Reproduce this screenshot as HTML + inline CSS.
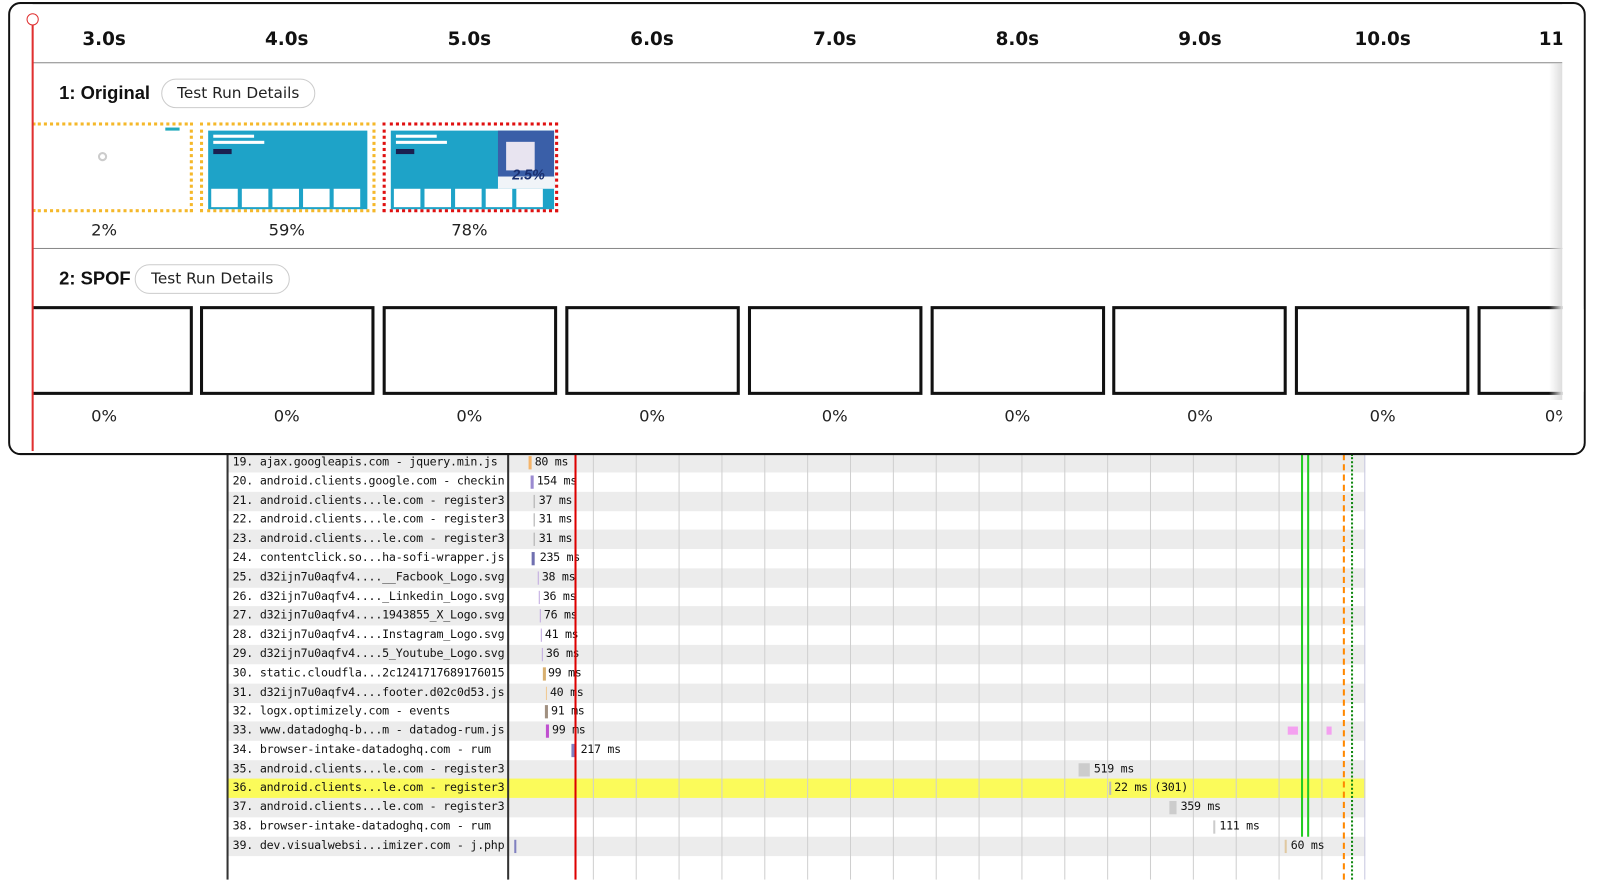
<!DOCTYPE html>
<html><head><meta charset="utf-8"><style>
*{margin:0;padding:0;box-sizing:border-box}
body{width:1600px;height:862px;background:#fff;position:relative;overflow:hidden;font-family:"Liberation Sans",sans-serif}
#w{position:absolute;left:0;top:0;width:1568px;height:845px;transform:scale(1.0204);transform-origin:0 0}
.a{position:absolute}
.row{position:absolute;left:222px;width:1116px;height:19px}
.lbl{position:absolute;left:6px;top:1px;font-family:"DejaVu Sans Mono","Liberation Mono",monospace;font-size:11.4px;color:#111;white-space:nowrap;letter-spacing:-0.2px}
.ms{position:absolute;top:1px;font-family:"DejaVu Sans Mono","Liberation Mono",monospace;font-size:11.4px;color:#111;white-space:nowrap;letter-spacing:-0.3px}
.bar{position:absolute;top:3px;height:13px;width:3px}
.grid{position:absolute;top:445px;height:417px;width:1px;background:#cfcfcf}
.tl{position:absolute;top:24px;font-size:18px;font-weight:bold;color:#111;width:80px;margin-left:-40px;text-align:center;font-family:"DejaVu Sans","Liberation Sans",sans-serif}
.pc{position:absolute;font-size:16px;color:#222;width:80px;margin-left:-40px;text-align:center;font-family:"DejaVu Sans","Liberation Sans",sans-serif}
.fr{position:absolute;top:300px;height:87px;border:3px solid #111;background:#fff}
.pill{position:absolute;border:1px solid #ccc;border-radius:15px;height:29px;font-size:15px;color:#222;text-align:center;line-height:27px;font-family:"DejaVu Sans","Liberation Sans",sans-serif}
.rl{position:absolute;font-size:18px;font-weight:bold;color:#111;font-family:"Liberation Sans",sans-serif}
</style></head><body><div id="w">

<div class="a" style="left:222px;top:445px;width:1116px;height:417px;background:#fff"></div>
<div class="row" style="top:444px;background:#ececec"></div>
<div class="row" style="top:482px;background:#ececec"></div>
<div class="row" style="top:519px;background:#ececec"></div>
<div class="row" style="top:557px;background:#ececec"></div>
<div class="row" style="top:594px;background:#ececec"></div>
<div class="row" style="top:632px;background:#ececec"></div>
<div class="row" style="top:670px;background:#ececec"></div>
<div class="row" style="top:707px;background:#ececec"></div>
<div class="row" style="top:745px;background:#ececec"></div>
<div class="row" style="top:763px;background:#fbfb5a"></div>
<div class="row" style="top:782px;background:#ececec"></div>
<div class="row" style="top:820px;background:#ececec"></div>

<div class="grid" style="left:581px"></div><div class="grid" style="left:623px"></div><div class="grid" style="left:665px"></div><div class="grid" style="left:707px"></div><div class="grid" style="left:749px"></div><div class="grid" style="left:791px"></div><div class="grid" style="left:833px"></div><div class="grid" style="left:875px"></div><div class="grid" style="left:917px"></div><div class="grid" style="left:959px"></div><div class="grid" style="left:1001px"></div><div class="grid" style="left:1043px"></div><div class="grid" style="left:1085px"></div><div class="grid" style="left:1127px"></div><div class="grid" style="left:1169px"></div><div class="grid" style="left:1211px"></div><div class="grid" style="left:1253px"></div><div class="grid" style="left:1295px"></div>
<div class="a" style="left:1337px;top:445px;width:1px;height:417px;background:#c8c8e0"></div>
<div class="a" style="left:222px;top:445px;width:2px;height:417px;background:#333"></div>
<div class="a" style="left:497px;top:445px;width:2px;height:417px;background:#333"></div>

<div class="row" style="top:444px"><span class="lbl">19. ajax.googleapis.com - jquery.min.js</span><div class="bar" style="left:296px;background:#f4b46a"></div><span class="ms" style="left:302px">80 ms</span></div>
<div class="row" style="top:463px"><span class="lbl">20. android.clients.google.com - checkin</span><div class="bar" style="left:298px;background:#9a8ad0"></div><span class="ms" style="left:304px">154 ms</span></div>
<div class="row" style="top:482px"><span class="lbl">21. android.clients...le.com - register3</span><div class="bar" style="left:301px;width:1px;background:#aaa"></div><span class="ms" style="left:306px">37 ms</span></div>
<div class="row" style="top:500px"><span class="lbl">22. android.clients...le.com - register3</span><div class="bar" style="left:301px;width:1px;background:#aaa"></div><span class="ms" style="left:306px">31 ms</span></div>
<div class="row" style="top:519px"><span class="lbl">23. android.clients...le.com - register3</span><div class="bar" style="left:301px;width:1px;background:#aaa"></div><span class="ms" style="left:306px">31 ms</span></div>
<div class="row" style="top:538px"><span class="lbl">24. contentclick.so...ha-sofi-wrapper.js</span><div class="bar" style="left:299px;background:#7070b0"></div><span class="ms" style="left:307px">235 ms</span></div>
<div class="row" style="top:557px"><span class="lbl">25. d32ijn7u0aqfv4....__Facbook_Logo.svg</span><div class="bar" style="left:305px;width:1px;background:#c0a8e0"></div><span class="ms" style="left:309px">38 ms</span></div>
<div class="row" style="top:576px"><span class="lbl">26. d32ijn7u0aqfv4...._Linkedin_Logo.svg</span><div class="bar" style="left:306px;width:1px;background:#c0a8e0"></div><span class="ms" style="left:310px">36 ms</span></div>
<div class="row" style="top:594px"><span class="lbl">27. d32ijn7u0aqfv4....1943855_X_Logo.svg</span><div class="bar" style="left:307px;width:1px;background:#c0a8e0"></div><span class="ms" style="left:311px">76 ms</span></div>
<div class="row" style="top:613px"><span class="lbl">28. d32ijn7u0aqfv4....Instagram_Logo.svg</span><div class="bar" style="left:308px;width:1px;background:#c0a8e0"></div><span class="ms" style="left:312px">41 ms</span></div>
<div class="row" style="top:632px"><span class="lbl">29. d32ijn7u0aqfv4....5_Youtube_Logo.svg</span><div class="bar" style="left:309px;width:1px;background:#c0a8e0"></div><span class="ms" style="left:313px">36 ms</span></div>
<div class="row" style="top:651px"><span class="lbl">30. static.cloudfla...2c1241717689176015</span><div class="bar" style="left:310px;background:#d8b070"></div><span class="ms" style="left:315px">99 ms</span></div>
<div class="row" style="top:670px"><span class="lbl">31. d32ijn7u0aqfv4....footer.d02c0d53.js</span><div class="bar" style="left:313px;width:1px;background:#f0c890"></div><span class="ms" style="left:317px">40 ms</span></div>
<div class="row" style="top:688px"><span class="lbl">32. logx.optimizely.com - events</span><div class="bar" style="left:312px;background:#a09080"></div><span class="ms" style="left:318px">91 ms</span></div>
<div class="row" style="top:707px"><span class="lbl">33. www.datadoghq-b...m - datadog-rum.js</span><div class="bar" style="left:313px;background:#c050d0"></div><span class="ms" style="left:319px">99 ms</span></div>
<div class="row" style="top:726px"><span class="lbl">34. browser-intake-datadoghq.com - rum</span><div class="bar" style="left:338px;background:#8080c0"></div><span class="ms" style="left:347px">217 ms</span></div>
<div class="row" style="top:745px"><span class="lbl">35. android.clients...le.com - register3</span><div class="bar" style="left:835px;width:11px;background:#ccc"></div><span class="ms" style="left:850px">519 ms</span></div>
<div class="row" style="top:763px"><span class="lbl">36. android.clients...le.com - register3</span><div class="bar" style="left:865px;width:2px;background:#bbb"></div><span class="ms" style="left:870px">22 ms (301)</span></div>
<div class="row" style="top:782px"><span class="lbl">37. android.clients...le.com - register3</span><div class="bar" style="left:924px;width:7px;background:#ccc"></div><span class="ms" style="left:935px">359 ms</span></div>
<div class="row" style="top:801px"><span class="lbl">38. browser-intake-datadoghq.com - rum</span><div class="bar" style="left:967px;width:2px;background:#ccc"></div><span class="ms" style="left:973px">111 ms</span></div>
<div class="row" style="top:820px"><span class="lbl">39. dev.visualwebsi...imizer.com - j.php</span><div class="bar" style="left:282px;width:2px;background:#8080c0"></div><div class="bar" style="left:1037px;width:2px;background:#e0c8a0"></div><span class="ms" style="left:1043px">60 ms</span></div>

<div class="a" style="left:1262px;top:712px;width:10px;height:8px;background:#f4a0f0"></div>
<div class="a" style="left:1300px;top:712px;width:5px;height:8px;background:#f4a0f0"></div>
<div class="a" style="left:563px;top:445px;width:2px;height:417px;background:#d00"></div>
<div class="a" style="left:1275px;top:445px;width:2px;height:375px;background:#2c2"></div>
<div class="a" style="left:1281px;top:445px;width:2px;height:375px;background:#2c2"></div>
<div class="a" style="left:1316px;top:445px;width:0;height:417px;border-left:2px dashed #f80"></div>
<div class="a" style="left:1324px;top:445px;width:0;height:417px;border-left:2px dotted #181"></div>

<div class="a" style="left:8px;top:2px;width:1546px;height:444px;border:2px solid #111;border-radius:12px;background:#fff;overflow:hidden">
  <div class="a" style="left:22px;top:57px;width:1501px;height:1px;background:#888"></div>
  <div class="a" style="left:22px;top:239px;width:1501px;height:1px;background:#888"></div>
  <div class="tl" style="left:92px">3.0s</div><div class="tl" style="left:271px">4.0s</div><div class="tl" style="left:450px">5.0s</div><div class="tl" style="left:629px">6.0s</div><div class="tl" style="left:808px">7.0s</div><div class="tl" style="left:987px">8.0s</div><div class="tl" style="left:1166px">9.0s</div><div class="tl" style="left:1345px">10.0s</div><div class="tl" style="left:1510px;text-align:left;margin-left:-12px">11</div>

  <div class="rl" style="left:48px;top:77px">1: Original</div>
  <div class="pill" style="left:148px;top:73px;width:151px">Test Run Details</div>
  <div class="rl" style="left:48px;top:259px">2: SPOF</div>
  <div class="pill" style="left:122px;top:255px;width:152px">Test Run Details</div>

  <div class="a" style="left:22px;top:116px;width:157px;height:88px;border:3px dotted #f5b82a;border-left:none;background:#fff">
    <div class="a" style="left:64px;top:26px;width:9px;height:9px;border-radius:50%;border:2px solid #ccc"></div>
    <div class="a" style="left:130px;top:2px;width:14px;height:3px;background:#2ab"></div>
  </div>
  <div class="a" style="left:186px;top:116px;width:172px;height:88px;border:3px dotted #f5b82a;background:#fff">
    <div class="a" style="left:5px;top:5px;width:156px;height:77px;background:#1ea3c8"></div>
    <div class="a" style="left:10px;top:9px;width:40px;height:3px;background:#fff"></div>
    <div class="a" style="left:10px;top:15px;width:50px;height:3px;background:#fff"></div>
    <div class="a" style="left:10px;top:23px;width:18px;height:5px;background:#1a2050"></div>
    <div class="a" style="left:8px;top:62px;width:26px;height:18px;background:#fff"></div><div class="a" style="left:38px;top:62px;width:26px;height:18px;background:#fff"></div><div class="a" style="left:68px;top:62px;width:26px;height:18px;background:#fff"></div><div class="a" style="left:98px;top:62px;width:26px;height:18px;background:#fff"></div><div class="a" style="left:128px;top:62px;width:26px;height:18px;background:#fff"></div>
  </div>
  <div class="a" style="left:365px;top:116px;width:172px;height:88px;border:3px dotted #e01010;background:#fff">
    <div class="a" style="left:5px;top:5px;width:160px;height:77px;background:#1ea3c8"></div>
    <div class="a" style="left:110px;top:5px;width:55px;height:55px;background:#3a5fa8"></div>
    <div class="a" style="left:118px;top:16px;width:28px;height:28px;background:#e8e4f0"></div>
    <div class="a" style="left:110px;top:50px;width:55px;height:12px;background:#f0f4f8"></div>
    <div class="a" style="left:124px;top:40px;font-size:14px;font-weight:bold;font-style:italic;color:#1a3070">2.5%</div>
    <div class="a" style="left:10px;top:9px;width:40px;height:3px;background:#fff"></div>
    <div class="a" style="left:10px;top:15px;width:50px;height:3px;background:#fff"></div>
    <div class="a" style="left:10px;top:23px;width:18px;height:5px;background:#1a2050"></div>
    <div class="a" style="left:8px;top:62px;width:26px;height:18px;background:#fff"></div><div class="a" style="left:38px;top:62px;width:26px;height:18px;background:#fff"></div><div class="a" style="left:68px;top:62px;width:26px;height:18px;background:#fff"></div><div class="a" style="left:98px;top:62px;width:26px;height:18px;background:#fff"></div><div class="a" style="left:128px;top:62px;width:26px;height:18px;background:#fff"></div>
  </div>
  <div class="pc" style="left:92px;top:212px">2%</div><div class="pc" style="left:271px;top:212px">59%</div><div class="pc" style="left:450px;top:212px">78%</div>

  <div class="fr" style="left:14px;top:296px;width:165px"></div>
  <div class="fr" style="left:186px;top:296px;width:171px"></div>
  <div class="fr" style="left:365px;top:296px;width:171px"></div>
  <div class="fr" style="left:544px;top:296px;width:171px"></div>
  <div class="fr" style="left:723px;top:296px;width:171px"></div>
  <div class="fr" style="left:902px;top:296px;width:171px"></div>
  <div class="fr" style="left:1080px;top:296px;width:171px"></div>
  <div class="fr" style="left:1259px;top:296px;width:171px"></div>
  <div class="fr" style="left:1438px;top:296px;width:171px"></div>
  <div class="pc" style="left:92px;top:394px">0%</div><div class="pc" style="left:271px;top:394px">0%</div><div class="pc" style="left:450px;top:394px">0%</div><div class="pc" style="left:629px;top:394px">0%</div><div class="pc" style="left:808px;top:394px">0%</div><div class="pc" style="left:987px;top:394px">0%</div><div class="pc" style="left:1166px;top:394px">0%</div><div class="pc" style="left:1345px;top:394px">0%</div><div class="pc" style="left:1510px;top:394px;text-align:left;margin-left:-6px">0%</div>

  <div class="a" style="left:1521px;top:0;width:25px;height:444px;background:#fff"></div>
  <div class="a" style="left:1508px;top:58px;width:13px;height:330px;background:linear-gradient(to right,rgba(255,255,255,0),#ddd)"></div>
  <div class="a" style="left:0;top:0;width:22px;height:444px;background:#fff"></div>
  <div class="a" style="left:21px;top:16px;width:2px;height:422px;background:#e03030"></div>
  <div class="a" style="left:16px;top:9px;width:12px;height:12px;border-radius:50%;border:1.5px solid #e03030;background:#fff"></div>
</div>
</div></body></html>
